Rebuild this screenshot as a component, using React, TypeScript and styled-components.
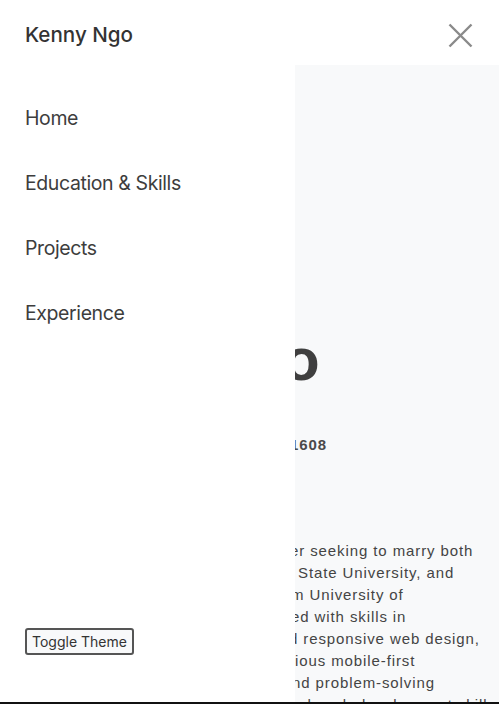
import React from "react";
import styled, { createGlobalStyle } from "styled-components";

const GlobalStyle = createGlobalStyle`
  html, body {
    margin: 0;
    padding: 0;
    height: 100%;
    overflow: hidden;
    background: #f8f9fa;
  }
  body {
    font-family: "Liberation Sans", Arial, sans-serif;
  }
  #root {
    height: 100%;
  }
`;

const Page = styled.div`
  display: flex;
  flex-direction: column;
  height: 100vh;
  background: #f8f9fa;
`;

const NavBar = styled.header`
  flex: 0 0 65px;
  display: flex;
  align-items: center;
  justify-content: flex-end;
  padding: 0 26px 0 25px;
  background: #ffffff;
`;

const CloseButton = styled.button`
  display: flex;
  align-items: center;
  justify-content: center;
  width: 26px;
  height: 26px;
  margin-top: 6px;
  padding: 0;
  border: none;
  background: transparent;
  cursor: pointer;
`;

const Main = styled.main`
  flex: 1;
  display: flex;
  flex-direction: column;
  padding-left: 289px;
  color: #444444;
  background: #f8f9fa;
`;

const Heading = styled.h1`
  margin: 265px 0 0;
  font-family: "Liberation Sans", Arial, sans-serif;
  font-size: 60px;
  line-height: 60px;
  font-weight: 700;
  color: #3f3f3f;
  white-space: nowrap;
  text-indent: -6px;
`;

const Phone = styled.div`
  margin-top: 45px;
  font-size: 15px;
  line-height: 20px;
  font-weight: 700;
  letter-spacing: 0.9px;
  color: #4a4a4a;
  white-space: nowrap;
  text-indent: 1px;
`;

const Paragraph = styled.div`
  margin-top: 85px;
  display: flex;
  flex-direction: column;
`;

const Line = styled.span<{ $indent: number }>`
  display: block;
  font-size: 15px;
  line-height: 22px;
  letter-spacing: 0.9px;
  color: #444444;
  white-space: nowrap;
  padding-left: ${(p) => p.$indent}px;
`;

const Drawer = styled.aside`
  position: fixed;
  top: 0;
  left: 0;
  bottom: 0;
  width: 295px;
  box-sizing: border-box;
  display: flex;
  flex-direction: column;
  padding: 0 25px 49px;
  background: #ffffff;
  font-family: Inter, "Noto Sans", sans-serif;
`;

const Brand = styled.div`
  height: 68px;
  display: flex;
  align-items: center;
  font-size: 20.6px;
  font-weight: 500;
  color: #333333;
`;

const NavList = styled.nav`
  display: flex;
  flex-direction: column;
  gap: 41px;
  padding-top: 38px;
`;

const NavLink = styled.a`
  display: block;
  font-size: 19.5px;
  line-height: 24px;
  letter-spacing: -0.4px;
  font-weight: 400;
  color: #3d3d3d;
  text-decoration: none;
`;

const ToggleButton = styled.button`
  margin-top: auto;
  align-self: flex-start;
  padding: 3px 5px;
  border: 2px solid #555555;
  border-radius: 3px;
  background: #f8f9fa;
  font-family: Inter, "Noto Sans", sans-serif;
  font-size: 14px;
  line-height: 17px;
  color: #333333;
  cursor: pointer;
`;

const BottomEdge = styled.div`
  position: fixed;
  left: 0;
  right: 0;
  bottom: 0;
  height: 2px;
  background: #111111;
`;

const lines: [string, number][] = [
  ["er seeking to marry both", 1],
  ["State University, and", 9],
  ["m University of", 2],
  ["ed with skills in", 2],
  ["d responsive web design,", 0],
  ["ious mobile-first", 6],
  ["nd problem-solving", 3],
  ["ugh web development skills", 0],
];

export default function App() {
  return (
    <>
      <GlobalStyle />
      <Page>
        <NavBar>
          <CloseButton aria-label="Close menu">
            <svg width="25" height="25" viewBox="0 0 25 25">
              <path
                d="M1.5 1.5 L23.5 23.5 M23.5 1.5 L1.5 23.5"
                stroke="#8a8a8a"
                strokeWidth="2.4"
                fill="none"
              />
            </svg>
          </CloseButton>
        </NavBar>
        <Main>
          <Heading>o</Heading>
          <Phone>1608</Phone>
          <Paragraph>
            {lines.map(([text, indent]) => (
              <Line key={text} $indent={indent}>
                {text}
              </Line>
            ))}
          </Paragraph>
        </Main>
      </Page>
      <Drawer>
        <Brand>Kenny Ngo</Brand>
        <NavList>
          <NavLink href="#home">Home</NavLink>
          <NavLink href="#education">Education &amp; Skills</NavLink>
          <NavLink href="#projects">Projects</NavLink>
          <NavLink href="#experience">Experience</NavLink>
        </NavList>
        <ToggleButton>Toggle Theme</ToggleButton>
      </Drawer>
      <BottomEdge />
    </>
  );
}
